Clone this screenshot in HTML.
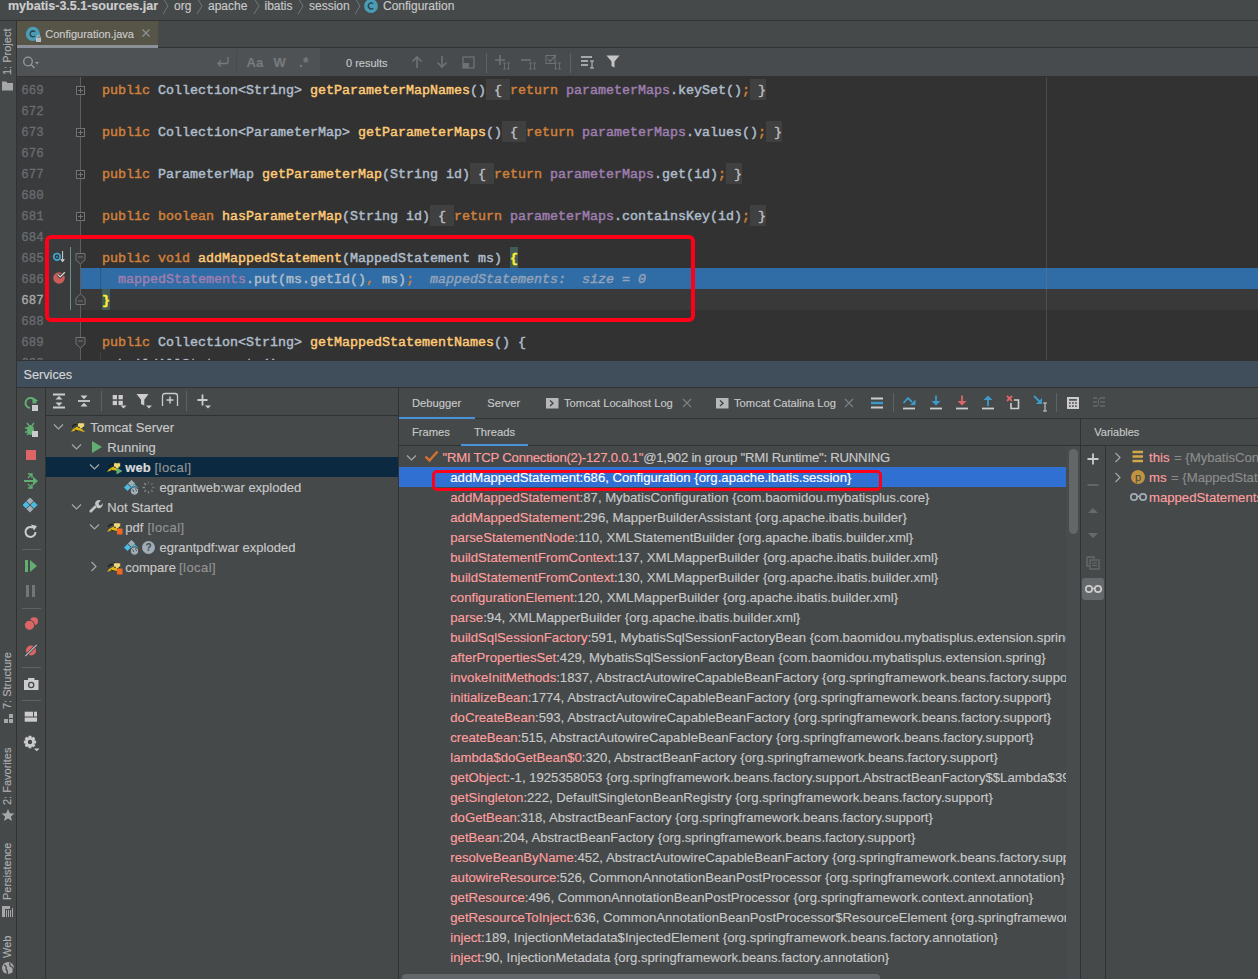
<!DOCTYPE html>
<html><head><meta charset="utf-8"><title>IDE</title>
<style>
html,body{margin:0;padding:0;}
body{width:1258px;height:979px;overflow:hidden;position:relative;background:#45494a;font-family:'Liberation Sans', sans-serif;-webkit-font-smoothing:antialiased;}
div{-webkit-text-stroke:0.15px currentColor;}
</style></head><body>
<div style="position:absolute;left:0px;top:0px;width:1258px;height:20px;background:#45494a;"></div>
<div style="position:absolute;left:0px;top:20px;width:1258px;height:1px;background:#323232;"></div>
<div style="position:absolute;left:8px;top:-14.33px;height:40px;line-height:40px;font-family:'Liberation Sans', sans-serif;font-size:12.5px;color:#cdcdcd;font-weight:bold;white-space:pre;">mybatis-3.5.1-sources.jar</div>
<div style="position:absolute;left:174px;top:-14.16px;height:40px;line-height:40px;font-family:'Liberation Sans', sans-serif;font-size:12px;color:#c8c8c8;font-weight:normal;white-space:pre;">org</div>
<div style="position:absolute;left:208px;top:-14.16px;height:40px;line-height:40px;font-family:'Liberation Sans', sans-serif;font-size:12px;color:#c8c8c8;font-weight:normal;white-space:pre;">apache</div>
<div style="position:absolute;left:264.5px;top:-14.16px;height:40px;line-height:40px;font-family:'Liberation Sans', sans-serif;font-size:12px;color:#c8c8c8;font-weight:normal;white-space:pre;">ibatis</div>
<div style="position:absolute;left:309px;top:-14.16px;height:40px;line-height:40px;font-family:'Liberation Sans', sans-serif;font-size:12px;color:#c8c8c8;font-weight:normal;white-space:pre;">session</div>
<div style="position:absolute;left:383px;top:-14.16px;height:40px;line-height:40px;font-family:'Liberation Sans', sans-serif;font-size:12px;color:#c8c8c8;font-weight:normal;white-space:pre;">Configuration</div>
<svg style="position:absolute;left:161.5px;top:-2px;" width="8" height="18" viewBox="0 0 8 18"><path d="M1 0 L6 8 L1 16" stroke="#747779" stroke-width="1" fill="none"/></svg>
<svg style="position:absolute;left:195.5px;top:-2px;" width="8" height="18" viewBox="0 0 8 18"><path d="M1 0 L6 8 L1 16" stroke="#747779" stroke-width="1" fill="none"/></svg>
<svg style="position:absolute;left:252.5px;top:-2px;" width="8" height="18" viewBox="0 0 8 18"><path d="M1 0 L6 8 L1 16" stroke="#747779" stroke-width="1" fill="none"/></svg>
<svg style="position:absolute;left:296.5px;top:-2px;" width="8" height="18" viewBox="0 0 8 18"><path d="M1 0 L6 8 L1 16" stroke="#747779" stroke-width="1" fill="none"/></svg>
<svg style="position:absolute;left:353.5px;top:-2px;" width="8" height="18" viewBox="0 0 8 18"><path d="M1 0 L6 8 L1 16" stroke="#747779" stroke-width="1" fill="none"/></svg>
<svg style="position:absolute;left:363px;top:-1px;" width="16" height="16" viewBox="0 0 16 16"><circle cx="8" cy="7" r="6.9" fill="#4a9db5"/><path d="M10.2 4.9 A2.9 2.9 0 1 0 10.2 9.1" stroke="#2a3f48" stroke-width="1.3" fill="none"/></svg>
<div style="position:absolute;left:0px;top:21px;width:16px;height:958px;background:#45494a;"></div>
<div style="position:absolute;left:16px;top:21px;width:1px;height:958px;background:#323232;"></div>
<div style="position:absolute;left:17px;top:21px;width:1241px;height:27px;background:#45494a;"></div>
<div style="position:absolute;left:17px;top:21px;width:141px;height:24px;background:#575448;"></div>
<div style="position:absolute;left:17px;top:45px;width:141px;height:3px;background:#8c9099;"></div>
<div style="position:absolute;left:158px;top:47px;width:1100px;height:1px;background:#323232;"></div>
<svg style="position:absolute;left:25px;top:26px;" width="18" height="18" viewBox="0 0 18 18"><circle cx="7.9" cy="7.9" r="7.1" fill="#4a9db5"/><path d="M10.1 5.9 A2.9 2.9 0 1 0 10.1 9.9" stroke="#2a3f48" stroke-width="1.3" fill="none"/><rect x="11" y="12" width="5" height="4" fill="#b8bfc6"/><path d="M12 12.2 v-1.5 a1.5 1.5 0 0 1 3 0 v1.5" stroke="#b8bfc6" fill="none" stroke-width="1"/></svg>
<div style="position:absolute;left:45.3px;top:14.39px;height:40px;line-height:40px;font-family:'Liberation Sans', sans-serif;font-size:11px;color:#cccccc;font-weight:normal;white-space:pre;">Configuration.java</div>
<svg style="position:absolute;left:141px;top:28px;" width="10" height="10" viewBox="0 0 10 10"><path d="M1.5 1.5 L8.5 8.5 M8.5 1.5 L1.5 8.5" stroke="#929597" stroke-width="1.1"/></svg>
<div style="position:absolute;left:17px;top:48px;width:1241px;height:28px;background:#474b4d;"></div>
<div style="position:absolute;left:17px;top:48px;width:303px;height:28px;background:#4e5254;"></div>
<div style="position:absolute;left:17px;top:76px;width:1241px;height:1px;background:#323232;"></div>
<svg style="position:absolute;left:22px;top:56px;" width="20" height="14" viewBox="0 0 20 14"><circle cx="6" cy="5.5" r="4.3" stroke="#969a9b" stroke-width="1.3" fill="none"/><path d="M9 8.5 L12.5 12" stroke="#969a9b" stroke-width="1.4"/><path d="M13 6 h4 l-2 2.5z" fill="#969a9b"/></svg>
<svg style="position:absolute;left:216px;top:56px;" width="14" height="12" viewBox="0 0 14 12"><path d="M12 1 v5 a1.5 1.5 0 0 1 -1.5 1.5 H2" stroke="#777b7d" stroke-width="1.3" fill="none"/><path d="M5 4.5 L2 7.5 L5 10.5" stroke="#777b7d" stroke-width="1.3" fill="none"/></svg>
<div style="position:absolute;left:236px;top:50px;width:1px;height:24px;background:#464b4d;"></div>
<div style="position:absolute;left:246.5px;top:42.50px;height:40px;line-height:40px;font-family:'Liberation Sans', sans-serif;font-size:13px;color:#777b7d;font-weight:bold;white-space:pre;">Aa</div>
<div style="position:absolute;left:273.5px;top:42.50px;height:40px;line-height:40px;font-family:'Liberation Sans', sans-serif;font-size:13px;color:#777b7d;font-weight:bold;white-space:pre;">W</div>
<div style="position:absolute;left:299px;top:42.15px;height:40px;line-height:40px;font-family:'Liberation Sans', sans-serif;font-size:14px;color:#777b7d;font-weight:bold;white-space:pre;">.*</div>
<div style="position:absolute;left:346px;top:43.19px;height:40px;line-height:40px;font-family:'Liberation Sans', sans-serif;font-size:11px;color:#c8c8c8;font-weight:normal;white-space:pre;">0 results</div>
<svg style="position:absolute;left:411px;top:55px;" width="12" height="14" viewBox="0 0 12 14"><path d="M6 13 V2 M1.5 6.5 L6 2 L10.5 6.5" stroke="#6e7274" stroke-width="1.6" fill="none"/></svg>
<svg style="position:absolute;left:436px;top:55px;" width="12" height="14" viewBox="0 0 12 14"><path d="M6 1 V12 M1.5 7.5 L6 12 L10.5 7.5" stroke="#6e7274" stroke-width="1.6" fill="none"/></svg>
<svg style="position:absolute;left:462px;top:56px;" width="14" height="13" viewBox="0 0 14 13"><rect x="1" y="1" width="11" height="11" stroke="#6e7274" stroke-width="1.3" fill="none"/><rect x="1" y="7" width="6" height="5" fill="#6e7274"/></svg>
<div style="position:absolute;left:486px;top:53px;width:1px;height:20px;background:#5e6264;"></div>
<svg style="position:absolute;left:494px;top:54px;" width="18" height="16" viewBox="0 0 18 16"><path d="M6 1 V11 M1 6 H11" stroke="#6e7274" stroke-width="1.6"/><path d="M9 9 h3 M10.5 9 v6 M9 15 h3 M13 9 h3 M14.5 9 v6 M13 15 h3" stroke="#6e7274" stroke-width="0.9"/></svg>
<svg style="position:absolute;left:520px;top:54px;" width="18" height="16" viewBox="0 0 18 16"><path d="M1 6 H11" stroke="#6e7274" stroke-width="1.6"/><path d="M9 9 h3 M10.5 9 v6 M9 15 h3 M13 9 h3 M14.5 9 v6 M13 15 h3" stroke="#6e7274" stroke-width="0.9"/></svg>
<svg style="position:absolute;left:545px;top:54px;" width="18" height="16" viewBox="0 0 18 16"><rect x="1" y="1.5" width="9" height="8" stroke="#6e7274" stroke-width="1" fill="none"/><path d="M3 5 L5 7.5 L11 1" stroke="#6e7274" stroke-width="1.2" fill="none"/><path d="M9 9 h3 M10.5 9 v6 M9 15 h3 M13 9 h3 M14.5 9 v6 M13 15 h3" stroke="#6e7274" stroke-width="0.9"/></svg>
<div style="position:absolute;left:570px;top:53px;width:1px;height:20px;background:#5e6264;"></div>
<svg style="position:absolute;left:580px;top:55px;" width="16" height="14" viewBox="0 0 16 14"><path d="M1 2 H12 M1 6 H8 M1 10 H8" stroke="#c5c5c5" stroke-width="1.6"/><path d="M10 6 h4 M12 6 v7 M10 13 h4" stroke="#c5c5c5" stroke-width="1"/></svg>
<svg style="position:absolute;left:606px;top:55px;" width="14" height="13" viewBox="0 0 14 13"><path d="M0.5 0.5 H13.5 L8.5 6.5 V12.5 L5.5 11 V6.5 Z" fill="#c5c5c5"/></svg>
<div style="position:absolute;left:17px;top:77px;width:1241px;height:283px;background:#323232;"></div>
<div style="position:absolute;left:17px;top:77px;width:63px;height:283px;background:#393b3d;"></div>
<div style="position:absolute;left:80px;top:77px;width:1px;height:283px;background:#5e5e5e;"></div>
<div style="position:absolute;left:17px;top:360px;width:1241px;height:1px;background:#323232;"></div>
<div style="position:absolute;left:0;top:0;width:1258px;height:360px;overflow:hidden">
<div style="position:absolute;left:21.3px;top:71.00px;height:40px;line-height:40px;font-family:'Liberation Mono', monospace;font-size:12.4px;color:#696c6f;font-weight:normal;white-space:pre;-webkit-text-stroke:0.35px currentColor">669</div>
<svg style="position:absolute;left:76px;top:86px;" width="9" height="9" viewBox="0 0 9 9"><rect x="0.5" y="0.5" width="8" height="8" fill="#323232" stroke="#747474"/><path d="M2 4.5 H7 M4.5 2 V7" stroke="#747474"/></svg>
<div style="position:absolute;left:486px;top:79px;width:24px;height:21px;background:#404040;"></div>
<div style="position:absolute;left:750px;top:79px;width:16px;height:21px;background:#404040;"></div>
<div style="position:absolute;left:102px;top:70.75px;line-height:40px;font-family:'Liberation Mono', monospace;font-size:13.333px;white-space:pre;-webkit-text-stroke:0.45px currentColor"><span style="color:#d0803a">public </span><span style="color:#afbdcb">Collection&lt;String&gt; </span><span style="color:#ffcb76">getParameterMapNames</span><span style="color:#afbdcb">()</span><span style="color:#bdbdbd"> { </span><span style="color:#d0803a">return </span><span style="color:#9f7eb0">parameterMaps</span><span style="color:#afbdcb">.keySet()</span><span style="color:#d0803a">;</span><span style="color:#bdbdbd"> }</span></div>
<div style="position:absolute;left:21.3px;top:92.00px;height:40px;line-height:40px;font-family:'Liberation Mono', monospace;font-size:12.4px;color:#696c6f;font-weight:normal;white-space:pre;-webkit-text-stroke:0.35px currentColor">672</div>
<div style="position:absolute;left:21.3px;top:113.00px;height:40px;line-height:40px;font-family:'Liberation Mono', monospace;font-size:12.4px;color:#696c6f;font-weight:normal;white-space:pre;-webkit-text-stroke:0.35px currentColor">673</div>
<svg style="position:absolute;left:76px;top:128px;" width="9" height="9" viewBox="0 0 9 9"><rect x="0.5" y="0.5" width="8" height="8" fill="#323232" stroke="#747474"/><path d="M2 4.5 H7 M4.5 2 V7" stroke="#747474"/></svg>
<div style="position:absolute;left:502px;top:121px;width:24px;height:21px;background:#404040;"></div>
<div style="position:absolute;left:766px;top:121px;width:16px;height:21px;background:#404040;"></div>
<div style="position:absolute;left:102px;top:112.75px;line-height:40px;font-family:'Liberation Mono', monospace;font-size:13.333px;white-space:pre;-webkit-text-stroke:0.45px currentColor"><span style="color:#d0803a">public </span><span style="color:#afbdcb">Collection&lt;ParameterMap&gt; </span><span style="color:#ffcb76">getParameterMaps</span><span style="color:#afbdcb">()</span><span style="color:#bdbdbd"> { </span><span style="color:#d0803a">return </span><span style="color:#9f7eb0">parameterMaps</span><span style="color:#afbdcb">.values()</span><span style="color:#d0803a">;</span><span style="color:#bdbdbd"> }</span></div>
<div style="position:absolute;left:21.3px;top:134.00px;height:40px;line-height:40px;font-family:'Liberation Mono', monospace;font-size:12.4px;color:#696c6f;font-weight:normal;white-space:pre;-webkit-text-stroke:0.35px currentColor">676</div>
<div style="position:absolute;left:21.3px;top:155.00px;height:40px;line-height:40px;font-family:'Liberation Mono', monospace;font-size:12.4px;color:#696c6f;font-weight:normal;white-space:pre;-webkit-text-stroke:0.35px currentColor">677</div>
<svg style="position:absolute;left:76px;top:170px;" width="9" height="9" viewBox="0 0 9 9"><rect x="0.5" y="0.5" width="8" height="8" fill="#323232" stroke="#747474"/><path d="M2 4.5 H7 M4.5 2 V7" stroke="#747474"/></svg>
<div style="position:absolute;left:470px;top:163px;width:24px;height:21px;background:#404040;"></div>
<div style="position:absolute;left:726px;top:163px;width:16px;height:21px;background:#404040;"></div>
<div style="position:absolute;left:102px;top:154.75px;line-height:40px;font-family:'Liberation Mono', monospace;font-size:13.333px;white-space:pre;-webkit-text-stroke:0.45px currentColor"><span style="color:#d0803a">public </span><span style="color:#afbdcb">ParameterMap </span><span style="color:#ffcb76">getParameterMap</span><span style="color:#afbdcb">(String id)</span><span style="color:#bdbdbd"> { </span><span style="color:#d0803a">return </span><span style="color:#9f7eb0">parameterMaps</span><span style="color:#afbdcb">.get(id)</span><span style="color:#d0803a">;</span><span style="color:#bdbdbd"> }</span></div>
<div style="position:absolute;left:21.3px;top:176.00px;height:40px;line-height:40px;font-family:'Liberation Mono', monospace;font-size:12.4px;color:#696c6f;font-weight:normal;white-space:pre;-webkit-text-stroke:0.35px currentColor">680</div>
<div style="position:absolute;left:21.3px;top:197.00px;height:40px;line-height:40px;font-family:'Liberation Mono', monospace;font-size:12.4px;color:#696c6f;font-weight:normal;white-space:pre;-webkit-text-stroke:0.35px currentColor">681</div>
<svg style="position:absolute;left:76px;top:212px;" width="9" height="9" viewBox="0 0 9 9"><rect x="0.5" y="0.5" width="8" height="8" fill="#323232" stroke="#747474"/><path d="M2 4.5 H7 M4.5 2 V7" stroke="#747474"/></svg>
<div style="position:absolute;left:430px;top:205px;width:24px;height:21px;background:#404040;"></div>
<div style="position:absolute;left:750px;top:205px;width:16px;height:21px;background:#404040;"></div>
<div style="position:absolute;left:102px;top:196.75px;line-height:40px;font-family:'Liberation Mono', monospace;font-size:13.333px;white-space:pre;-webkit-text-stroke:0.45px currentColor"><span style="color:#d0803a">public boolean </span><span style="color:#ffcb76">hasParameterMap</span><span style="color:#afbdcb">(String id)</span><span style="color:#bdbdbd"> { </span><span style="color:#d0803a">return </span><span style="color:#9f7eb0">parameterMaps</span><span style="color:#afbdcb">.containsKey(id)</span><span style="color:#d0803a">;</span><span style="color:#bdbdbd"> }</span></div>
<div style="position:absolute;left:21.3px;top:218.00px;height:40px;line-height:40px;font-family:'Liberation Mono', monospace;font-size:12.4px;color:#696c6f;font-weight:normal;white-space:pre;-webkit-text-stroke:0.35px currentColor">684</div>
<div style="position:absolute;left:21.3px;top:239.00px;height:40px;line-height:40px;font-family:'Liberation Mono', monospace;font-size:12.4px;color:#696c6f;font-weight:normal;white-space:pre;-webkit-text-stroke:0.35px currentColor">685</div>
<svg style="position:absolute;left:75px;top:253px;" width="11" height="12" viewBox="0 0 11 12"><path d="M1 0.5 H10 V7 L5.5 11 L1 7 Z" fill="#393b3d" stroke="#747474"/><path d="M3 4 H8" stroke="#747474"/></svg>
<div style="position:absolute;left:510px;top:247px;width:8px;height:21px;background:#435a56;"></div>
<div style="position:absolute;left:102px;top:238.75px;line-height:40px;font-family:'Liberation Mono', monospace;font-size:13.333px;white-space:pre;-webkit-text-stroke:0.45px currentColor"><span style="color:#d0803a">public void </span><span style="color:#ffcb76">addMappedStatement</span><span style="color:#afbdcb">(MappedStatement ms) </span><span style="color:#fff02f;font-weight:bold">{</span></div>
<div style="position:absolute;left:81px;top:268px;width:1177px;height:21px;background:#306ca5;"></div>
<div style="position:absolute;left:100px;top:268px;width:1px;height:21px;background:#2d5884;"></div>
<div style="position:absolute;left:21.3px;top:260.00px;height:40px;line-height:40px;font-family:'Liberation Mono', monospace;font-size:12.4px;color:#696c6f;font-weight:normal;white-space:pre;-webkit-text-stroke:0.35px currentColor">686</div>
<div style="position:absolute;left:102px;top:259.75px;line-height:40px;font-family:'Liberation Mono', monospace;font-size:13.333px;white-space:pre;-webkit-text-stroke:0.45px currentColor"><span style="color:#afbdcb">  </span><span style="color:#9f7eb0">mappedStatements</span><span style="color:#afbdcb">.put(ms.getId()</span><span style="color:#d0803a">, </span><span style="color:#afbdcb">ms)</span><span style="color:#d0803a">;</span><span style="color:#92a2b9;font-style:italic">  mappedStatements:  size = 0</span></div>
<div style="position:absolute;left:81px;top:289px;width:1177px;height:21px;background:#393939;"></div>
<div style="position:absolute;left:21.3px;top:281.00px;height:40px;line-height:40px;font-family:'Liberation Mono', monospace;font-size:12.4px;color:#abaaaa;font-weight:normal;white-space:pre;-webkit-text-stroke:0.35px currentColor">687</div>
<svg style="position:absolute;left:75px;top:293px;" width="11" height="12" viewBox="0 0 11 12"><path d="M1 11.5 H10 V5 L5.5 1 L1 5 Z" fill="#393b3d" stroke="#747474"/><path d="M3 8 H8" stroke="#747474"/></svg>
<div style="position:absolute;left:102px;top:289px;width:8px;height:21px;background:#435a56;"></div>
<div style="position:absolute;left:102px;top:280.75px;line-height:40px;font-family:'Liberation Mono', monospace;font-size:13.333px;white-space:pre;-webkit-text-stroke:0.45px currentColor"><span style="color:#fff02f;font-weight:bold">}</span></div>
<div style="position:absolute;left:21.3px;top:302.00px;height:40px;line-height:40px;font-family:'Liberation Mono', monospace;font-size:12.4px;color:#696c6f;font-weight:normal;white-space:pre;-webkit-text-stroke:0.35px currentColor">688</div>
<div style="position:absolute;left:21.3px;top:323.00px;height:40px;line-height:40px;font-family:'Liberation Mono', monospace;font-size:12.4px;color:#696c6f;font-weight:normal;white-space:pre;-webkit-text-stroke:0.35px currentColor">689</div>
<svg style="position:absolute;left:75px;top:337px;" width="11" height="12" viewBox="0 0 11 12"><path d="M1 0.5 H10 V7 L5.5 11 L1 7 Z" fill="#393b3d" stroke="#747474"/><path d="M3 4 H8" stroke="#747474"/></svg>
<div style="position:absolute;left:102px;top:322.75px;line-height:40px;font-family:'Liberation Mono', monospace;font-size:13.333px;white-space:pre;-webkit-text-stroke:0.45px currentColor"><span style="color:#d0803a">public </span><span style="color:#afbdcb">Collection&lt;String&gt; </span><span style="color:#ffcb76">getMappedStatementNames</span><span style="color:#afbdcb">() {</span></div>
<div style="position:absolute;left:21.3px;top:344.00px;height:40px;line-height:40px;font-family:'Liberation Mono', monospace;font-size:12.4px;color:#696c6f;font-weight:normal;white-space:pre;-webkit-text-stroke:0.35px currentColor">690</div>
<div style="position:absolute;left:102px;top:344.95px;line-height:40px;font-family:'Liberation Mono', monospace;font-size:13.333px;white-space:pre;-webkit-text-stroke:0.45px currentColor"><span style="color:#afbdcb">  buildAllStatements();</span></div>
<div style="position:absolute;left:1046px;top:77px;width:1px;height:283px;background:rgba(120,120,120,0.35);"></div>
<div style="position:absolute;left:100px;top:352px;width:1px;height:8px;background:#404040;"></div>
</div>
<div style="position:absolute;left:70px;top:247px;width:1px;height:63px;background:#689388;"></div>
<svg style="position:absolute;left:50px;top:249px;" width="16" height="16" viewBox="0 0 16 16"><circle cx="7" cy="7.8" r="3.3" stroke="#3ea6d0" stroke-width="1.7" fill="none"/><circle cx="7" cy="7.8" r="0.9" fill="#3ea6d0"/><path d="M12.6 2 V10.5" stroke="#d4d4d4" stroke-width="1"/><path d="M10.2 10.2 H15 L12.6 13.2 Z" fill="#d4d4d4"/></svg>
<svg style="position:absolute;left:51px;top:271px;" width="16" height="16" viewBox="0 0 16 16"><circle cx="8" cy="7" r="5.8" fill="#cb5d59"/><path d="M6.8 3.6 L9.2 5.9 L13.8 1.3" stroke="#393b3d" stroke-width="3" fill="none"/><path d="M6.8 3.6 L9.2 5.9 L13.8 1.3" stroke="#dbdbdb" stroke-width="1.3" fill="none"/></svg>
<div style="position:absolute;box-sizing:border-box;left:45px;top:234.5px;width:650px;height:87px;border:4px solid #ff0019;border-radius:6px"></div>
<div style="position:absolute;left:17px;top:361px;width:1241px;height:26px;background:#404e5c;"></div>
<div style="position:absolute;left:17px;top:387px;width:1241px;height:1px;background:#323232;"></div>
<div style="position:absolute;left:23.5px;top:354.60px;height:40px;line-height:40px;font-family:'Liberation Sans', sans-serif;font-size:12.7px;color:#d4d4d4;font-weight:normal;white-space:pre;">Services</div>
<div style="position:absolute;left:17px;top:388px;width:1241px;height:591px;background:#45494a;"></div>
<div style="position:absolute;left:45px;top:388px;width:1px;height:591px;background:#323232;"></div>
<div style="position:absolute;left:46px;top:415px;width:352px;height:1px;background:#323232;"></div>
<div style="position:absolute;left:398px;top:388px;width:1px;height:591px;background:#323232;"></div>
<svg style="position:absolute;left:23px;top:396px;" width="16" height="16" viewBox="0 0 16 16"><path d="M12.5 7.5 A5 5 0 1 0 7 12" stroke="#62ae72" stroke-width="2" fill="none"/><path d="M9.5 1 L15 4.5 L9.5 8 Z" fill="#62ae72"/><rect x="9" y="9" width="6" height="6" fill="#cccccc"/></svg>
<svg style="position:absolute;left:23px;top:422px;" width="16" height="16" viewBox="0 0 16 16"><path d="M4 1 L6 3.5 M11 1 L9 3.5 M2 6 H5 M2 10 H5 M4 13 L6 11" stroke="#62ae72" stroke-width="1.5"/><ellipse cx="7.5" cy="8" rx="3.5" ry="5" fill="#62ae72"/><rect x="9" y="9" width="6" height="6" fill="#cccccc"/></svg>
<div style="position:absolute;left:26px;top:450px;width:10px;height:10px;background:#de6565;"></div>
<svg style="position:absolute;left:23px;top:473px;" width="16" height="16" viewBox="0 0 16 16"><path d="M1 8 H11" stroke="#62ae72" stroke-width="2"/><path d="M10 3.5 L15 8 L10 12.5 Z" fill="#62ae72"/><path d="M5 5 L9 1 M5 1 H9 V5 M5 11 L9 15 M5 15 H9 V11" stroke="#62ae72" stroke-width="1.4" fill="none"/></svg>
<svg style="position:absolute;left:23px;top:498px;" width="16" height="16" viewBox="0 0 16 16"><rect x="4.5" y="0.5" width="5" height="5" transform="rotate(45 7 3)" fill="#a1adb6"/><rect x="0.5" y="4.5" width="5" height="5" transform="rotate(45 3 7)" fill="#48bce3"/><rect x="8.5" y="4.5" width="5" height="5" transform="rotate(45 11 7)" fill="#48bce3"/><rect x="4.5" y="8.5" width="5" height="5" transform="rotate(45 7 11)" fill="#a1adb6"/></svg>
<svg style="position:absolute;left:23px;top:524px;" width="16" height="16" viewBox="0 0 16 16"><path d="M12.5 8 A5 5 0 1 1 10 3.6" stroke="#cccccc" stroke-width="2" fill="none"/><path d="M8 0.5 L14 2 L11 6.5 Z" fill="#cccccc"/></svg>
<div style="position:absolute;left:22px;top:549px;width:19px;height:1px;background:#5e6264;"></div>
<svg style="position:absolute;left:23px;top:558px;" width="16" height="16" viewBox="0 0 16 16"><rect x="2" y="2" width="3" height="12" fill="#62ae72"/><path d="M7 2 L14 8 L7 14 Z" fill="#62ae72"/></svg>
<svg style="position:absolute;left:23px;top:583px;" width="16" height="16" viewBox="0 0 16 16"><rect x="3" y="2" width="3" height="12" fill="#737678"/><rect x="9" y="2" width="3" height="12" fill="#737678"/></svg>
<div style="position:absolute;left:22px;top:608px;width:19px;height:1px;background:#5e6264;"></div>
<svg style="position:absolute;left:23px;top:615px;" width="16" height="16" viewBox="0 0 16 16"><circle cx="11" cy="6.3" r="4" fill="#de6565"/><circle cx="6.5" cy="10.3" r="5" fill="#de6565" stroke="#45494a" stroke-width="1"/></svg>
<svg style="position:absolute;left:23px;top:643px;" width="16" height="16" viewBox="0 0 16 16"><circle cx="8" cy="7.5" r="5" fill="#de6565"/><path d="M2 13.5 L14 1.5" stroke="#44474a" stroke-width="2.6"/><path d="M2.3 13.2 L13.7 1.8" stroke="#c2c2c2" stroke-width="1.1"/></svg>
<div style="position:absolute;left:22px;top:667px;width:19px;height:1px;background:#5e6264;"></div>
<svg style="position:absolute;left:23px;top:676px;" width="16" height="16" viewBox="0 0 16 16"><rect x="1" y="4" width="14.5" height="10" fill="#cccccc"/><rect x="5" y="2" width="6.5" height="3" fill="#cccccc"/><circle cx="8.2" cy="9" r="2.6" fill="none" stroke="#44474a" stroke-width="1.3"/></svg>
<div style="position:absolute;left:22px;top:700px;width:19px;height:1px;background:#5e6264;"></div>
<svg style="position:absolute;left:23px;top:710px;" width="16" height="16" viewBox="0 0 16 16"><rect x="1.7" y="1.7" width="8.3" height="4.8" fill="#cccccc"/><rect x="11" y="1.7" width="3" height="4.8" fill="#cccccc"/><rect x="1.7" y="7.5" width="12.3" height="4.2" fill="#cccccc"/></svg>
<svg style="position:absolute;left:22px;top:734px;" width="18" height="18" viewBox="0 0 18 18"><path d="M14.15 6.63 L14.15 9.37 L12.25 9.75 L12.25 9.77 L13.32 11.38 L11.38 13.32 L9.77 12.25 L9.75 12.25 L9.37 14.15 L6.63 14.15 L6.25 12.25 L6.23 12.25 L4.62 13.32 L2.68 11.38 L3.75 9.77 L3.75 9.75 L1.85 9.37 L1.85 6.63 L3.75 6.25 L3.75 6.23 L2.68 4.62 L4.62 2.68 L6.23 3.75 L6.25 3.75 L6.63 1.85 L9.37 1.85 L9.75 3.75 L9.77 3.75 L11.38 2.68 L13.32 4.62 L12.25 6.23 L12.25 6.25 Z" fill="#cccccc"/><circle cx="8" cy="8" r="2.2" fill="#44474a"/><path d="M12 14.5 h5.5 l-2.75 2.75z" fill="#cccccc"/></svg>
<div style="position:absolute;left:-0.5px;top:75px;transform:rotate(-90deg);transform-origin:0 0;font-family:'Liberation Sans', sans-serif;font-size:11px;color:#aeaeae;white-space:nowrap;line-height:14px">1: Project</div>
<svg style="position:absolute;left:0.5px;top:80px;" width="13" height="12" viewBox="0 0 13 12"><path d="M1 1.5 H5 L6.5 3 H12 V10.5 H1 Z" fill="#a7a7a7"/></svg>
<div style="position:absolute;left:-0.5px;top:709px;transform:rotate(-90deg);transform-origin:0 0;font-family:'Liberation Sans', sans-serif;font-size:11px;color:#aeaeae;white-space:nowrap;line-height:14px">7: Structure</div>
<svg style="position:absolute;left:2px;top:712px;" width="13" height="13" viewBox="0 0 13 13"><rect x="2" y="7" width="4" height="4" fill="#a7a7a7"/><rect x="7" y="7" width="4" height="4" fill="#a7a7a7"/><rect x="7" y="2" width="4" height="4" fill="#a7a7a7"/></svg>
<div style="position:absolute;left:-0.5px;top:805px;transform:rotate(-90deg);transform-origin:0 0;font-family:'Liberation Sans', sans-serif;font-size:11px;color:#aeaeae;white-space:nowrap;line-height:14px">2: Favorites</div>
<svg style="position:absolute;left:1px;top:808px;" width="14" height="14" viewBox="0 0 14 14"><path d="M7 1 L8.8 5.3 L13.5 5.6 L9.9 8.6 L11 13 L7 10.6 L3 13 L4.1 8.6 L0.5 5.6 L5.2 5.3 Z" fill="#a7a7a7"/></svg>
<div style="position:absolute;left:-0.5px;top:900px;transform:rotate(-90deg);transform-origin:0 0;font-family:'Liberation Sans', sans-serif;font-size:11px;color:#aeaeae;white-space:nowrap;line-height:14px">Persistence</div>
<svg style="position:absolute;left:1px;top:904px;" width="14" height="14" viewBox="0 0 14 14"><rect x="1" y="2" width="8" height="3" fill="#a7a7a7"/><rect x="1" y="2" width="3" height="11" fill="#a7a7a7"/><path d="M5.5 6 V13 M7.5 6 V13 M9.5 6 V13 M11.5 4 V13" stroke="#a7a7a7" stroke-width="1"/></svg>
<div style="position:absolute;left:-0.5px;top:958px;transform:rotate(-90deg);transform-origin:0 0;font-family:'Liberation Sans', sans-serif;font-size:11px;color:#aeaeae;white-space:nowrap;line-height:14px">Web</div>
<svg style="position:absolute;left:1px;top:961px;" width="14" height="14" viewBox="0 0 14 14"><circle cx="7" cy="7" r="6" fill="#a7a7a7"/><path d="M3 4 Q6 5 5 8 Q7 10 6 13 M9 2 Q8 5 11 6 Q13 7 12 10" stroke="#44474a" stroke-width="1.3" fill="none"/></svg>
<svg style="position:absolute;left:51px;top:392px;" width="17" height="18" viewBox="0 0 17 18"><path d="M2 2.5 H14 M2 15.5 H14" stroke="#cccccc" stroke-width="1.8"/><path d="M8 4 L11.5 7.6 H4.5 Z M8 14 L11.5 10.4 H4.5 Z" fill="#cccccc"/></svg>
<svg style="position:absolute;left:76px;top:392px;" width="17" height="18" viewBox="0 0 17 18"><path d="M2 9 H14" stroke="#cccccc" stroke-width="1.8"/><path d="M8 7.2 L11.5 3.6 H4.5 Z M8 10.8 L11.5 14.4 H4.5 Z" fill="#cccccc"/></svg>
<div style="position:absolute;left:101px;top:391px;width:1px;height:20px;background:#5e6264;"></div>
<svg style="position:absolute;left:111px;top:393px;" width="18" height="18" viewBox="0 0 18 18"><rect x="1.7" y="2" width="4.3" height="4.3" fill="#cccccc"/><rect x="7.5" y="2" width="4.3" height="4.3" fill="#cccccc"/><rect x="1.7" y="7.8" width="4.3" height="4.3" fill="#cccccc"/><rect x="7.5" y="7.8" width="4.3" height="4.3" fill="#cccccc"/><path d="M9.5 12.6 h6 l-3 3z" fill="#cccccc"/></svg>
<svg style="position:absolute;left:136px;top:393px;" width="18" height="18" viewBox="0 0 18 18"><path d="M0.5 1 H12.5 L8.3 6.8 V12.6 L5 11 V6.8 Z" fill="#cccccc"/><path d="M10 12.6 h6 l-3 3z" fill="#cccccc"/></svg>
<svg style="position:absolute;left:161px;top:392px;" width="18" height="18" viewBox="0 0 18 18"><path d="M1.5 14 V4 a2.5 2.5 0 0 1 2.5 -2.5 H14 a2.5 2.5 0 0 1 2.5 2.5 V14" stroke="#cccccc" stroke-width="1.3" fill="none"/><path d="M9 4.5 V11.5 M5.5 8 H12.5" stroke="#cccccc" stroke-width="1.5"/></svg>
<div style="position:absolute;left:186px;top:391px;width:1px;height:20px;background:#5e6264;"></div>
<svg style="position:absolute;left:195px;top:393px;" width="18" height="18" viewBox="0 0 18 18"><path d="M7.5 1.5 V12.5 M2.5 7 H12.5" stroke="#cccccc" stroke-width="1.8"/><path d="M10 12.6 h6 l-3 3z" fill="#cccccc"/></svg>
<div style="position:absolute;left:46px;top:457px;width:352px;height:20px;background:#0b2a41;"></div>
<svg style="position:absolute;left:53px;top:423px;" width="11" height="8" viewBox="0 0 11 8"><path d="M1 1.5 L5.5 6 L10 1.5" stroke="#a7a7a7" stroke-width="1.2" fill="none"/></svg>
<svg style="position:absolute;left:68px;top:416px;" width="20" height="20" viewBox="0 0 20 20"><path d="M4.2 11 Q5.5 8.3 8.8 8.4" stroke="#1a1a1a" stroke-width="1.1" fill="none"/><path d="M3 16 Q5 12.2 9 10.8 Q11.2 10.3 12.6 12.2 Q15 13.8 17.2 16.2 Q13.5 15.2 10.5 14.3 Q7 13.8 3 16 Z" fill="#e0b70e"/><path d="M10 7 L10.4 5.8 L12 7.2 H14.3 L15.9 5.8 L16.2 7.4 V10.6 Q15.2 12.2 13.1 12.2 Q11 12.2 10 10.6 Z" fill="#efd679"/><path d="M10.2 6.4 L11.3 7 M15.8 6.4 L14.8 7" stroke="#111" stroke-width="1.2"/><path d="M10.4 11.3 H11.6 M14.8 11.3 H16" stroke="#1a1a1a" stroke-width="1.2"/><path d="M6.8 13.5 Q8 15.2 9.2 14.8" stroke="#1a1a1a" stroke-width="1" fill="none"/></svg>
<div style="position:absolute;left:90.3px;top:408.30px;height:40px;line-height:40px;font-family:'Liberation Sans', sans-serif;font-size:13px;color:#c8c8c8;font-weight:normal;white-space:pre;">Tomcat Server</div>
<svg style="position:absolute;left:71px;top:443px;" width="11" height="8" viewBox="0 0 11 8"><path d="M1 1.5 L5.5 6 L10 1.5" stroke="#a7a7a7" stroke-width="1.2" fill="none"/></svg>
<svg style="position:absolute;left:91px;top:440px;" width="12" height="14" viewBox="0 0 12 14"><path d="M1 1 L11 7 L1 13 Z" fill="#62ae72"/></svg>
<div style="position:absolute;left:107.3px;top:428.30px;height:40px;line-height:40px;font-family:'Liberation Sans', sans-serif;font-size:13px;color:#c8c8c8;font-weight:normal;white-space:pre;">Running</div>
<svg style="position:absolute;left:89px;top:463px;" width="11" height="8" viewBox="0 0 11 8"><path d="M1 1.5 L5.5 6 L10 1.5" stroke="#a7a7a7" stroke-width="1.2" fill="none"/></svg>
<svg style="position:absolute;left:104px;top:456px;" width="20" height="20" viewBox="0 0 20 20"><path d="M4.2 11 Q5.5 8.3 8.8 8.4" stroke="#1a1a1a" stroke-width="1.1" fill="none"/><path d="M3 16 Q5 12.2 9 10.8 Q11.2 10.3 12.6 12.2 Q15 13.8 17.2 16.2 Q13.5 15.2 10.5 14.3 Q7 13.8 3 16 Z" fill="#e0b70e"/><path d="M10 7 L10.4 5.8 L12 7.2 H14.3 L15.9 5.8 L16.2 7.4 V10.6 Q15.2 12.2 13.1 12.2 Q11 12.2 10 10.6 Z" fill="#efd679"/><path d="M10.2 6.4 L11.3 7 M15.8 6.4 L14.8 7" stroke="#111" stroke-width="1.2"/><path d="M10.4 11.3 H11.6 M14.8 11.3 H16" stroke="#1a1a1a" stroke-width="1.2"/><path d="M6.8 13.5 Q8 15.2 9.2 14.8" stroke="#1a1a1a" stroke-width="1" fill="none"/><path d="M12.5 11.5 L18.5 15 L12.5 18.5 Z" fill="#62ae72"/></svg>
<div style="position:absolute;left:125.3px;top:448.30px;height:40px;line-height:40px;font-family:'Liberation Sans', sans-serif;font-size:13px;color:#dbdbdb;font-weight:bold;white-space:pre;">web</div>
<div style="position:absolute;left:154.5px;top:448.30px;height:40px;line-height:40px;font-family:'Liberation Sans', sans-serif;font-size:13px;color:#949494;font-weight:normal;white-space:pre;letter-spacing:0.45px">[local]</div>
<svg style="position:absolute;left:124px;top:480px;" width="17" height="16" viewBox="0 0 17 16"><rect x="5" y="1" width="5" height="5" transform="rotate(45 7.5 3.5)" fill="#a1adb6"/><rect x="1" y="5" width="5" height="5" transform="rotate(45 3.5 7.5)" fill="#48bce3"/><rect x="8" y="5" width="5" height="5" transform="rotate(45 10.5 7.5)" fill="#48bce3"/><circle cx="10.5" cy="11" r="4.2" fill="#a1adb6" stroke="#44474a" stroke-width="1"/><path d="M8 9.5 Q10 10 9.5 12 M12 8 Q11 10 13 11" stroke="#44474a" stroke-width="0.8" fill="none"/></svg>
<svg style="position:absolute;left:141px;top:480px;" width="15" height="15" viewBox="0 0 15 15"><path d="M7.5 1.5 V4" stroke="#929597" stroke-width="1.3" transform="rotate(0 7.5 7.5)" opacity="0.4"/><path d="M7.5 1.5 V4" stroke="#929597" stroke-width="1.3" transform="rotate(45 7.5 7.5)" opacity="0.47500000000000003"/><path d="M7.5 1.5 V4" stroke="#929597" stroke-width="1.3" transform="rotate(90 7.5 7.5)" opacity="0.55"/><path d="M7.5 1.5 V4" stroke="#929597" stroke-width="1.3" transform="rotate(135 7.5 7.5)" opacity="0.625"/><path d="M7.5 1.5 V4" stroke="#929597" stroke-width="1.3" transform="rotate(180 7.5 7.5)" opacity="0.7"/><path d="M7.5 1.5 V4" stroke="#929597" stroke-width="1.3" transform="rotate(225 7.5 7.5)" opacity="0.775"/><path d="M7.5 1.5 V4" stroke="#929597" stroke-width="1.3" transform="rotate(270 7.5 7.5)" opacity="0.85"/><path d="M7.5 1.5 V4" stroke="#929597" stroke-width="1.3" transform="rotate(315 7.5 7.5)" opacity="0.925"/></svg>
<div style="position:absolute;left:159.5px;top:468.30px;height:40px;line-height:40px;font-family:'Liberation Sans', sans-serif;font-size:13px;color:#c8c8c8;font-weight:normal;white-space:pre;">egrantweb:war exploded</div>
<svg style="position:absolute;left:71px;top:503px;" width="11" height="8" viewBox="0 0 11 8"><path d="M1 1.5 L5.5 6 L10 1.5" stroke="#a7a7a7" stroke-width="1.2" fill="none"/></svg>
<svg style="position:absolute;left:88px;top:499px;" width="15" height="15" viewBox="0 0 15 15"><path d="M2 13 L8 7" stroke="#c5c5c5" stroke-width="2.6"/><path d="M7 5 a4 4 0 0 1 6 -3.5 L10.5 4 L11 6 L13 6.5 L14.5 4 a4 4 0 0 1 -5 5 Z" fill="#c5c5c5"/></svg>
<div style="position:absolute;left:107.3px;top:488.30px;height:40px;line-height:40px;font-family:'Liberation Sans', sans-serif;font-size:13px;color:#c8c8c8;font-weight:normal;white-space:pre;">Not Started</div>
<svg style="position:absolute;left:89px;top:523px;" width="11" height="8" viewBox="0 0 11 8"><path d="M1 1.5 L5.5 6 L10 1.5" stroke="#a7a7a7" stroke-width="1.2" fill="none"/></svg>
<svg style="position:absolute;left:104px;top:516px;" width="20" height="20" viewBox="0 0 20 20"><path d="M4.2 11 Q5.5 8.3 8.8 8.4" stroke="#1a1a1a" stroke-width="1.1" fill="none"/><path d="M3 16 Q5 12.2 9 10.8 Q11.2 10.3 12.6 12.2 Q15 13.8 17.2 16.2 Q13.5 15.2 10.5 14.3 Q7 13.8 3 16 Z" fill="#e0b70e"/><path d="M10 7 L10.4 5.8 L12 7.2 H14.3 L15.9 5.8 L16.2 7.4 V10.6 Q15.2 12.2 13.1 12.2 Q11 12.2 10 10.6 Z" fill="#efd679"/><path d="M10.2 6.4 L11.3 7 M15.8 6.4 L14.8 7" stroke="#111" stroke-width="1.2"/><path d="M10.4 11.3 H11.6 M14.8 11.3 H16" stroke="#1a1a1a" stroke-width="1.2"/><path d="M6.8 13.5 Q8 15.2 9.2 14.8" stroke="#1a1a1a" stroke-width="1" fill="none"/><rect x="13" y="12.5" width="5.5" height="6" fill="#f26522"/></svg>
<div style="position:absolute;left:125.3px;top:508.30px;height:40px;line-height:40px;font-family:'Liberation Sans', sans-serif;font-size:13px;color:#c8c8c8;font-weight:normal;white-space:pre;">pdf</div>
<div style="position:absolute;left:147.5px;top:508.30px;height:40px;line-height:40px;font-family:'Liberation Sans', sans-serif;font-size:13px;color:#949494;font-weight:normal;white-space:pre;letter-spacing:0.45px">[local]</div>
<svg style="position:absolute;left:124px;top:540px;" width="17" height="16" viewBox="0 0 17 16"><rect x="5" y="1" width="5" height="5" transform="rotate(45 7.5 3.5)" fill="#a1adb6"/><rect x="1" y="5" width="5" height="5" transform="rotate(45 3.5 7.5)" fill="#48bce3"/><rect x="8" y="5" width="5" height="5" transform="rotate(45 10.5 7.5)" fill="#48bce3"/><circle cx="10.5" cy="11" r="4.2" fill="#a1adb6" stroke="#44474a" stroke-width="1"/><path d="M8 9.5 Q10 10 9.5 12 M12 8 Q11 10 13 11" stroke="#44474a" stroke-width="0.8" fill="none"/></svg>
<svg style="position:absolute;left:141px;top:540px;" width="15" height="15" viewBox="0 0 15 15"><circle cx="7.5" cy="7.5" r="6.5" fill="#a1adb6"/><text x="7.5" y="11.3" font-family="Liberation Sans" font-weight="bold" font-size="10" fill="#44474a" text-anchor="middle">?</text></svg>
<div style="position:absolute;left:159.5px;top:528.30px;height:40px;line-height:40px;font-family:'Liberation Sans', sans-serif;font-size:13px;color:#c8c8c8;font-weight:normal;white-space:pre;">egrantpdf:war exploded</div>
<svg style="position:absolute;left:90px;top:561px;" width="8" height="11" viewBox="0 0 8 11"><path d="M1.5 1 L6 5.5 L1.5 10" stroke="#a7a7a7" stroke-width="1.2" fill="none"/></svg>
<svg style="position:absolute;left:104px;top:556px;" width="20" height="20" viewBox="0 0 20 20"><path d="M4.2 11 Q5.5 8.3 8.8 8.4" stroke="#1a1a1a" stroke-width="1.1" fill="none"/><path d="M3 16 Q5 12.2 9 10.8 Q11.2 10.3 12.6 12.2 Q15 13.8 17.2 16.2 Q13.5 15.2 10.5 14.3 Q7 13.8 3 16 Z" fill="#e0b70e"/><path d="M10 7 L10.4 5.8 L12 7.2 H14.3 L15.9 5.8 L16.2 7.4 V10.6 Q15.2 12.2 13.1 12.2 Q11 12.2 10 10.6 Z" fill="#efd679"/><path d="M10.2 6.4 L11.3 7 M15.8 6.4 L14.8 7" stroke="#111" stroke-width="1.2"/><path d="M10.4 11.3 H11.6 M14.8 11.3 H16" stroke="#1a1a1a" stroke-width="1.2"/><path d="M6.8 13.5 Q8 15.2 9.2 14.8" stroke="#1a1a1a" stroke-width="1" fill="none"/><rect x="13" y="12.5" width="5.5" height="6" fill="#f26522"/></svg>
<div style="position:absolute;left:125.3px;top:548.30px;height:40px;line-height:40px;font-family:'Liberation Sans', sans-serif;font-size:13px;color:#c8c8c8;font-weight:normal;white-space:pre;">compare</div>
<div style="position:absolute;left:179px;top:548.30px;height:40px;line-height:40px;font-family:'Liberation Sans', sans-serif;font-size:13px;color:#949494;font-weight:normal;white-space:pre;letter-spacing:0.45px">[local]</div>
<div style="position:absolute;left:399px;top:418px;width:859px;height:1px;background:#323232;"></div>
<div style="position:absolute;left:399px;top:417px;width:76px;height:2px;background:#4b91da;"></div>
<div style="position:absolute;left:412px;top:383.42px;height:40px;line-height:40px;font-family:'Liberation Sans', sans-serif;font-size:11.2px;color:#c8c8c8;font-weight:normal;white-space:pre;">Debugger</div>
<div style="position:absolute;left:487.3px;top:383.42px;height:40px;line-height:40px;font-family:'Liberation Sans', sans-serif;font-size:11.2px;color:#c8c8c8;font-weight:normal;white-space:pre;">Server</div>
<svg style="position:absolute;left:546px;top:398px;" width="13" height="11" viewBox="0 0 13 11"><rect x="0" y="0" width="12.5" height="10.5" fill="#b5b7b9"/><path d="M4 2.5 L7 5.25 L4 8" stroke="#44474a" stroke-width="1.4" fill="none"/></svg>
<div style="position:absolute;left:564px;top:383.42px;height:40px;line-height:40px;font-family:'Liberation Sans', sans-serif;font-size:11.2px;color:#c8c8c8;font-weight:normal;white-space:pre;">Tomcat Localhost Log</div>
<svg style="position:absolute;left:682px;top:398px;" width="10" height="10" viewBox="0 0 10 10"><path d="M1 1 L9 9 M9 1 L1 9" stroke="#7d8183" stroke-width="1.1"/></svg>
<svg style="position:absolute;left:716px;top:398px;" width="13" height="11" viewBox="0 0 13 11"><rect x="0" y="0" width="12.5" height="10.5" fill="#b5b7b9"/><path d="M4 2.5 L7 5.25 L4 8" stroke="#44474a" stroke-width="1.4" fill="none"/></svg>
<div style="position:absolute;left:734px;top:383.42px;height:40px;line-height:40px;font-family:'Liberation Sans', sans-serif;font-size:11.2px;color:#c8c8c8;font-weight:normal;white-space:pre;">Tomcat Catalina Log</div>
<svg style="position:absolute;left:844px;top:398px;" width="10" height="10" viewBox="0 0 10 10"><path d="M1 1 L9 9 M9 1 L1 9" stroke="#7d8183" stroke-width="1.1"/></svg>
<svg style="position:absolute;left:870px;top:396px;" width="14" height="14" viewBox="0 0 14 14"><path d="M1 2.5 H13 M1 11.5 H13" stroke="#cccccc" stroke-width="1.8"/><path d="M1 7 H13" stroke="#3d9ac9" stroke-width="2.4"/></svg>
<div style="position:absolute;left:893px;top:393px;width:1px;height:19px;background:#5e6264;"></div>
<svg style="position:absolute;left:902px;top:395px;" width="16" height="16" viewBox="0 0 16 16"><path d="M1.5 8 L6 3 L10 7" stroke="#3d9ac9" stroke-width="1.8" fill="none"/><path d="M13.5 4.5 V10 H8 Z" fill="#3d9ac9"/><path d="M1 13.5 H13" stroke="#cccccc" stroke-width="1.8"/></svg>
<svg style="position:absolute;left:929px;top:395px;" width="14" height="16" viewBox="0 0 14 16"><path d="M7 0.5 V7" stroke="#3d9ac9" stroke-width="1.8"/><path d="M2.5 6 H11.5 L7 10.5 Z" fill="#3d9ac9"/><path d="M1 13.5 H13" stroke="#cccccc" stroke-width="1.8"/></svg>
<svg style="position:absolute;left:955px;top:395px;" width="14" height="16" viewBox="0 0 14 16"><path d="M7 0.5 V7" stroke="#de6565" stroke-width="1.8"/><path d="M2.5 6 H11.5 L7 10.5 Z" fill="#de6565"/><path d="M1 13.5 H13" stroke="#cccccc" stroke-width="1.8"/></svg>
<svg style="position:absolute;left:981px;top:395px;" width="14" height="16" viewBox="0 0 14 16"><path d="M7 4 V11" stroke="#3d9ac9" stroke-width="1.8"/><path d="M2.5 5 H11.5 L7 0.5 Z" fill="#3d9ac9"/><path d="M1 13.5 H13" stroke="#cccccc" stroke-width="1.8"/></svg>
<svg style="position:absolute;left:1006px;top:395px;" width="15" height="16" viewBox="0 0 15 16"><path d="M1 1 L6 6 M6 1 L1 6" stroke="#de6565" stroke-width="1.8"/><path d="M5 8 V13.5 H12.5 V5 H8" stroke="#cccccc" stroke-width="1.6" fill="none"/></svg>
<svg style="position:absolute;left:1033px;top:395px;" width="16" height="17" viewBox="0 0 16 17"><path d="M1 1 L7 7" stroke="#3d9ac9" stroke-width="1.8"/><path d="M9 3 V9 H3 Z" fill="#3d9ac9"/><path d="M10 8 h4 M12 8 v8 M10 16 h4" stroke="#cccccc" stroke-width="1.1"/></svg>
<div style="position:absolute;left:1056px;top:393px;width:1px;height:19px;background:#5e6264;"></div>
<svg style="position:absolute;left:1066px;top:396px;" width="14" height="14" viewBox="0 0 14 14"><rect x="1" y="1" width="12" height="12" fill="#cccccc"/><rect x="3.1" y="3.1" width="7.8" height="1.6" fill="#44474a"/><rect x="3.1" y="6.2" width="1.6" height="1.6" fill="#44474a"/><rect x="3.1" y="9.3" width="1.6" height="1.6" fill="#44474a"/><rect x="6.1" y="6.2" width="1.6" height="1.6" fill="#44474a"/><rect x="6.1" y="9.3" width="1.6" height="1.6" fill="#44474a"/><rect x="9.1" y="6.2" width="1.6" height="1.6" fill="#44474a"/><rect x="9.1" y="9.3" width="1.6" height="1.6" fill="#44474a"/></svg>
<svg style="position:absolute;left:1092px;top:396px;" width="14" height="13" viewBox="0 0 14 13"><path d="M1 2 H5 M1 6 H5 M1 10 H5 M8 2 H13 M8 6 H13 M8 10 H13" stroke="#676a6c" stroke-width="1.6" fill="none"/><path d="M8 2 Q6.5 2 6.5 5 V7 Q6.5 10 5 10" stroke="#676a6c" stroke-width="0.9" fill="none"/></svg>
<div style="position:absolute;left:399px;top:445px;width:682px;height:1px;background:#323232;"></div>
<div style="position:absolute;left:412px;top:412.12px;height:40px;line-height:40px;font-family:'Liberation Sans', sans-serif;font-size:11.2px;color:#c8c8c8;font-weight:normal;white-space:pre;">Frames</div>
<div style="position:absolute;left:474px;top:412.12px;height:40px;line-height:40px;font-family:'Liberation Sans', sans-serif;font-size:11.2px;color:#c8c8c8;font-weight:normal;white-space:pre;">Threads</div>
<div style="position:absolute;left:461px;top:444px;width:67px;height:2px;background:#4b91da;"></div>
<div style="position:absolute;left:1080px;top:419px;width:1px;height:560px;background:#323232;"></div>
<div style="position:absolute;left:1081px;top:445px;width:177px;height:1px;background:#323232;"></div>
<div style="position:absolute;left:1094.3px;top:412.19px;height:40px;line-height:40px;font-family:'Liberation Sans', sans-serif;font-size:11px;color:#c8c8c8;font-weight:normal;white-space:pre;">Variables</div>
<div style="position:absolute;left:399px;top:446px;width:667px;height:533px;overflow:hidden">
<svg style="position:absolute;left:7px;top:8px;" width="11" height="8" viewBox="0 0 11 8"><path d="M1 1.5 L5.5 6 L10 1.5" stroke="#a7a7a7" stroke-width="1.2" fill="none"/></svg>
<svg style="position:absolute;left:25px;top:4px;" width="15" height="13" viewBox="0 0 15 13"><path d="M1.5 6.5 L5.5 10.5 L13.5 1.5" stroke="#d4722e" stroke-width="2.4" fill="none"/></svg>
<div style="position:absolute;left:43.5px;top:-8.16px;height:40px;line-height:40px;font-family:'Liberation Sans', sans-serif;font-size:13.15px;white-space:pre;letter-spacing:-0.23px"><span style="color:#ff9e9e">"RMI TCP Connection(2)-127.0.0.1"</span><span style="color:#c8c8c8">@1,902 in group "RMI Runtime": RUNNING</span></div>
<div style="position:absolute;left:0px;top:21px;width:667px;height:20px;background:#3170d3;"></div>
<div style="position:absolute;left:51.30000000000001px;top:11.94px;height:40px;line-height:40px;font-family:'Liberation Sans', sans-serif;font-size:13.15px;white-space:pre"><span style="color:#ffffff">addMappedStatement</span><span style="color:#ffffff">:686, Configuration {org.apache.ibatis.session}</span></div>
<div style="position:absolute;left:51.30000000000001px;top:31.94px;height:40px;line-height:40px;font-family:'Liberation Sans', sans-serif;font-size:13.15px;white-space:pre"><span style="color:#ff9e9e">addMappedStatement</span><span style="color:#c8c8c8">:87, MybatisConfiguration {com.baomidou.mybatisplus.core}</span></div>
<div style="position:absolute;left:51.30000000000001px;top:51.94px;height:40px;line-height:40px;font-family:'Liberation Sans', sans-serif;font-size:13.15px;white-space:pre"><span style="color:#ff9e9e">addMappedStatement</span><span style="color:#c8c8c8">:296, MapperBuilderAssistant {org.apache.ibatis.builder}</span></div>
<div style="position:absolute;left:51.30000000000001px;top:71.94px;height:40px;line-height:40px;font-family:'Liberation Sans', sans-serif;font-size:13.15px;white-space:pre"><span style="color:#ff9e9e">parseStatementNode</span><span style="color:#c8c8c8">:110, XMLStatementBuilder {org.apache.ibatis.builder.xml}</span></div>
<div style="position:absolute;left:51.30000000000001px;top:91.94px;height:40px;line-height:40px;font-family:'Liberation Sans', sans-serif;font-size:13.15px;white-space:pre"><span style="color:#ff9e9e">buildStatementFromContext</span><span style="color:#c8c8c8">:137, XMLMapperBuilder {org.apache.ibatis.builder.xml}</span></div>
<div style="position:absolute;left:51.30000000000001px;top:111.94px;height:40px;line-height:40px;font-family:'Liberation Sans', sans-serif;font-size:13.15px;white-space:pre"><span style="color:#ff9e9e">buildStatementFromContext</span><span style="color:#c8c8c8">:130, XMLMapperBuilder {org.apache.ibatis.builder.xml}</span></div>
<div style="position:absolute;left:51.30000000000001px;top:131.94px;height:40px;line-height:40px;font-family:'Liberation Sans', sans-serif;font-size:13.15px;white-space:pre"><span style="color:#ff9e9e">configurationElement</span><span style="color:#c8c8c8">:120, XMLMapperBuilder {org.apache.ibatis.builder.xml}</span></div>
<div style="position:absolute;left:51.30000000000001px;top:151.94px;height:40px;line-height:40px;font-family:'Liberation Sans', sans-serif;font-size:13.15px;white-space:pre"><span style="color:#ff9e9e">parse</span><span style="color:#c8c8c8">:94, XMLMapperBuilder {org.apache.ibatis.builder.xml}</span></div>
<div style="position:absolute;left:51.30000000000001px;top:171.94px;height:40px;line-height:40px;font-family:'Liberation Sans', sans-serif;font-size:13.15px;white-space:pre"><span style="color:#ff9e9e">buildSqlSessionFactory</span><span style="color:#c8c8c8">:591, MybatisSqlSessionFactoryBean {com.baomidou.mybatisplus.extension.spring}</span></div>
<div style="position:absolute;left:51.30000000000001px;top:191.94px;height:40px;line-height:40px;font-family:'Liberation Sans', sans-serif;font-size:13.15px;white-space:pre"><span style="color:#ff9e9e">afterPropertiesSet</span><span style="color:#c8c8c8">:429, MybatisSqlSessionFactoryBean {com.baomidou.mybatisplus.extension.spring}</span></div>
<div style="position:absolute;left:51.30000000000001px;top:211.94px;height:40px;line-height:40px;font-family:'Liberation Sans', sans-serif;font-size:13.15px;white-space:pre"><span style="color:#ff9e9e">invokeInitMethods</span><span style="color:#c8c8c8">:1837, AbstractAutowireCapableBeanFactory {org.springframework.beans.factory.support}</span></div>
<div style="position:absolute;left:51.30000000000001px;top:231.94px;height:40px;line-height:40px;font-family:'Liberation Sans', sans-serif;font-size:13.15px;white-space:pre"><span style="color:#ff9e9e">initializeBean</span><span style="color:#c8c8c8">:1774, AbstractAutowireCapableBeanFactory {org.springframework.beans.factory.support}</span></div>
<div style="position:absolute;left:51.30000000000001px;top:251.94px;height:40px;line-height:40px;font-family:'Liberation Sans', sans-serif;font-size:13.15px;white-space:pre"><span style="color:#ff9e9e">doCreateBean</span><span style="color:#c8c8c8">:593, AbstractAutowireCapableBeanFactory {org.springframework.beans.factory.support}</span></div>
<div style="position:absolute;left:51.30000000000001px;top:271.94px;height:40px;line-height:40px;font-family:'Liberation Sans', sans-serif;font-size:13.15px;white-space:pre"><span style="color:#ff9e9e">createBean</span><span style="color:#c8c8c8">:515, AbstractAutowireCapableBeanFactory {org.springframework.beans.factory.support}</span></div>
<div style="position:absolute;left:51.30000000000001px;top:291.94px;height:40px;line-height:40px;font-family:'Liberation Sans', sans-serif;font-size:13.15px;white-space:pre"><span style="color:#ff9e9e">lambda$doGetBean$0</span><span style="color:#c8c8c8">:320, AbstractBeanFactory {org.springframework.beans.factory.support}</span></div>
<div style="position:absolute;left:51.30000000000001px;top:311.94px;height:40px;line-height:40px;font-family:'Liberation Sans', sans-serif;font-size:13.15px;white-space:pre"><span style="color:#ff9e9e">getObject</span><span style="color:#c8c8c8">:-1, 1925358053 {org.springframework.beans.factory.support.AbstractBeanFactory$$Lambda$397}</span></div>
<div style="position:absolute;left:51.30000000000001px;top:331.94px;height:40px;line-height:40px;font-family:'Liberation Sans', sans-serif;font-size:13.15px;white-space:pre"><span style="color:#ff9e9e">getSingleton</span><span style="color:#c8c8c8">:222, DefaultSingletonBeanRegistry {org.springframework.beans.factory.support}</span></div>
<div style="position:absolute;left:51.30000000000001px;top:351.94px;height:40px;line-height:40px;font-family:'Liberation Sans', sans-serif;font-size:13.15px;white-space:pre"><span style="color:#ff9e9e">doGetBean</span><span style="color:#c8c8c8">:318, AbstractBeanFactory {org.springframework.beans.factory.support}</span></div>
<div style="position:absolute;left:51.30000000000001px;top:371.94px;height:40px;line-height:40px;font-family:'Liberation Sans', sans-serif;font-size:13.15px;white-space:pre"><span style="color:#ff9e9e">getBean</span><span style="color:#c8c8c8">:204, AbstractBeanFactory {org.springframework.beans.factory.support}</span></div>
<div style="position:absolute;left:51.30000000000001px;top:391.94px;height:40px;line-height:40px;font-family:'Liberation Sans', sans-serif;font-size:13.15px;white-space:pre"><span style="color:#ff9e9e">resolveBeanByName</span><span style="color:#c8c8c8">:452, AbstractAutowireCapableBeanFactory {org.springframework.beans.factory.support}</span></div>
<div style="position:absolute;left:51.30000000000001px;top:411.94px;height:40px;line-height:40px;font-family:'Liberation Sans', sans-serif;font-size:13.15px;white-space:pre"><span style="color:#ff9e9e">autowireResource</span><span style="color:#c8c8c8">:526, CommonAnnotationBeanPostProcessor {org.springframework.context.annotation}</span></div>
<div style="position:absolute;left:51.30000000000001px;top:431.94px;height:40px;line-height:40px;font-family:'Liberation Sans', sans-serif;font-size:13.15px;white-space:pre"><span style="color:#ff9e9e">getResource</span><span style="color:#c8c8c8">:496, CommonAnnotationBeanPostProcessor {org.springframework.context.annotation}</span></div>
<div style="position:absolute;left:51.30000000000001px;top:451.94px;height:40px;line-height:40px;font-family:'Liberation Sans', sans-serif;font-size:13.15px;white-space:pre"><span style="color:#ff9e9e">getResourceToInject</span><span style="color:#c8c8c8">:636, CommonAnnotationBeanPostProcessor$ResourceElement {org.springframework.context.annotation}</span></div>
<div style="position:absolute;left:51.30000000000001px;top:471.94px;height:40px;line-height:40px;font-family:'Liberation Sans', sans-serif;font-size:13.15px;white-space:pre"><span style="color:#ff9e9e">inject</span><span style="color:#c8c8c8">:189, InjectionMetadata$InjectedElement {org.springframework.beans.factory.annotation}</span></div>
<div style="position:absolute;left:51.30000000000001px;top:491.94px;height:40px;line-height:40px;font-family:'Liberation Sans', sans-serif;font-size:13.15px;white-space:pre"><span style="color:#ff9e9e">inject</span><span style="color:#c8c8c8">:90, InjectionMetadata {org.springframework.beans.factory.annotation}</span></div>
</div>
<div style="position:absolute;box-sizing:border-box;left:431.5px;top:469.5px;width:450.5px;height:21.5px;border:3px solid #ff0019;border-radius:5px"></div>
<div style="position:absolute;left:1066px;top:446px;width:14px;height:533px;background:#484c4f;"></div>
<div style="position:absolute;left:1068.5px;top:449px;width:9px;height:85px;background:#646769;border-radius:4.5px"></div>
<div style="position:absolute;left:402px;top:974px;width:478px;height:8px;background:#646769;border-radius:4px"></div>
<div style="position:absolute;left:1105px;top:446px;width:1px;height:533px;background:#323232;"></div>
<svg style="position:absolute;left:1087px;top:453px;" width="12" height="12" viewBox="0 0 12 12"><path d="M6 0.5 V11.5 M0.5 6 H11.5" stroke="#cccccc" stroke-width="1.8"/></svg>
<svg style="position:absolute;left:1087px;top:479px;" width="12" height="12" viewBox="0 0 12 12"><path d="M0.5 6 H11.5" stroke="#676a6c" stroke-width="1.8"/></svg>
<svg style="position:absolute;left:1087px;top:506px;" width="12" height="8" viewBox="0 0 12 8"><path d="M1 7 L6 2 L11 7 Z" fill="#676a6c"/></svg>
<svg style="position:absolute;left:1087px;top:532px;" width="12" height="8" viewBox="0 0 12 8"><path d="M1 1 L6 6 L11 1 Z" fill="#676a6c"/></svg>
<svg style="position:absolute;left:1086px;top:556px;" width="14" height="14" viewBox="0 0 14 14"><path d="M1 1 H8 V3" stroke="#676a6c" stroke-width="1.4" fill="none"/><path d="M1 1 V10 H3" stroke="#676a6c" stroke-width="1.4" fill="none"/><rect x="4" y="4" width="9" height="9" fill="none" stroke="#676a6c" stroke-width="1.3"/><path d="M6 7 H11 M6 9.5 H11" stroke="#676a6c" stroke-width="1"/></svg>
<div style="position:absolute;left:1082px;top:578px;width:22px;height:22px;background:#65696c;border-radius:3px"></div>
<svg style="position:absolute;left:1085px;top:584px;" width="17" height="10" viewBox="0 0 17 10"><circle cx="4" cy="5" r="3.2" stroke="#cccccc" stroke-width="1.7" fill="none"/><circle cx="13" cy="5" r="3.2" stroke="#cccccc" stroke-width="1.7" fill="none"/><path d="M7 4.5 H10" stroke="#cccccc" stroke-width="1.5"/></svg>
<svg style="position:absolute;left:1114px;top:452px;" width="8" height="11" viewBox="0 0 8 11"><path d="M1.5 1 L6 5.5 L1.5 10" stroke="#a7a7a7" stroke-width="1.2" fill="none"/></svg>
<svg style="position:absolute;left:1114px;top:472px;" width="8" height="11" viewBox="0 0 8 11"><path d="M1.5 1 L6 5.5 L1.5 10" stroke="#a7a7a7" stroke-width="1.2" fill="none"/></svg>
<svg style="position:absolute;left:1132px;top:450px;" width="12" height="14" viewBox="0 0 12 14"><path d="M0.5 2 H11 M0.5 6.5 H11 M0.5 11 H11" stroke="#d4a848" stroke-width="2.5"/></svg>
<div style="position:absolute;left:1149px;top:438.44px;height:40px;line-height:40px;font-family:'Liberation Sans', sans-serif;font-size:13.15px;color:#ff9e9e;font-weight:normal;white-space:pre;">this</div>
<div style="position:absolute;left:1174px;top:438.44px;height:40px;line-height:40px;font-family:'Liberation Sans', sans-serif;font-size:13.15px;color:#8c8c8c;font-weight:normal;white-space:pre;">= {MybatisConfiguration@6207}</div>
<svg style="position:absolute;left:1130px;top:469px;" width="16" height="16" viewBox="0 0 16 16"><circle cx="8" cy="8" r="7" fill="#bf9340"/><text x="8" y="12" font-family="Liberation Sans" font-size="11" fill="#44474a" text-anchor="middle">p</text></svg>
<div style="position:absolute;left:1149px;top:458.44px;height:40px;line-height:40px;font-family:'Liberation Sans', sans-serif;font-size:13.15px;color:#ff9e9e;font-weight:normal;white-space:pre;">ms</div>
<div style="position:absolute;left:1171px;top:458.44px;height:40px;line-height:40px;font-family:'Liberation Sans', sans-serif;font-size:13.15px;color:#8c8c8c;font-weight:normal;white-space:pre;">= {MappedStatement@6208}</div>
<svg style="position:absolute;left:1130px;top:492px;" width="17" height="10" viewBox="0 0 17 10"><circle cx="4" cy="5" r="3.2" stroke="#a1adb6" stroke-width="1.7" fill="none"/><circle cx="13" cy="5" r="3.2" stroke="#a1adb6" stroke-width="1.7" fill="none"/><path d="M7 4.5 H10" stroke="#a1adb6" stroke-width="1.5"/></svg>
<div style="position:absolute;left:1149px;top:478.44px;height:40px;line-height:40px;font-family:'Liberation Sans', sans-serif;font-size:13.15px;color:#ff9e9e;font-weight:normal;white-space:pre;">mappedStatements = {HashMap@6209} size = 0</div>
</body></html>
